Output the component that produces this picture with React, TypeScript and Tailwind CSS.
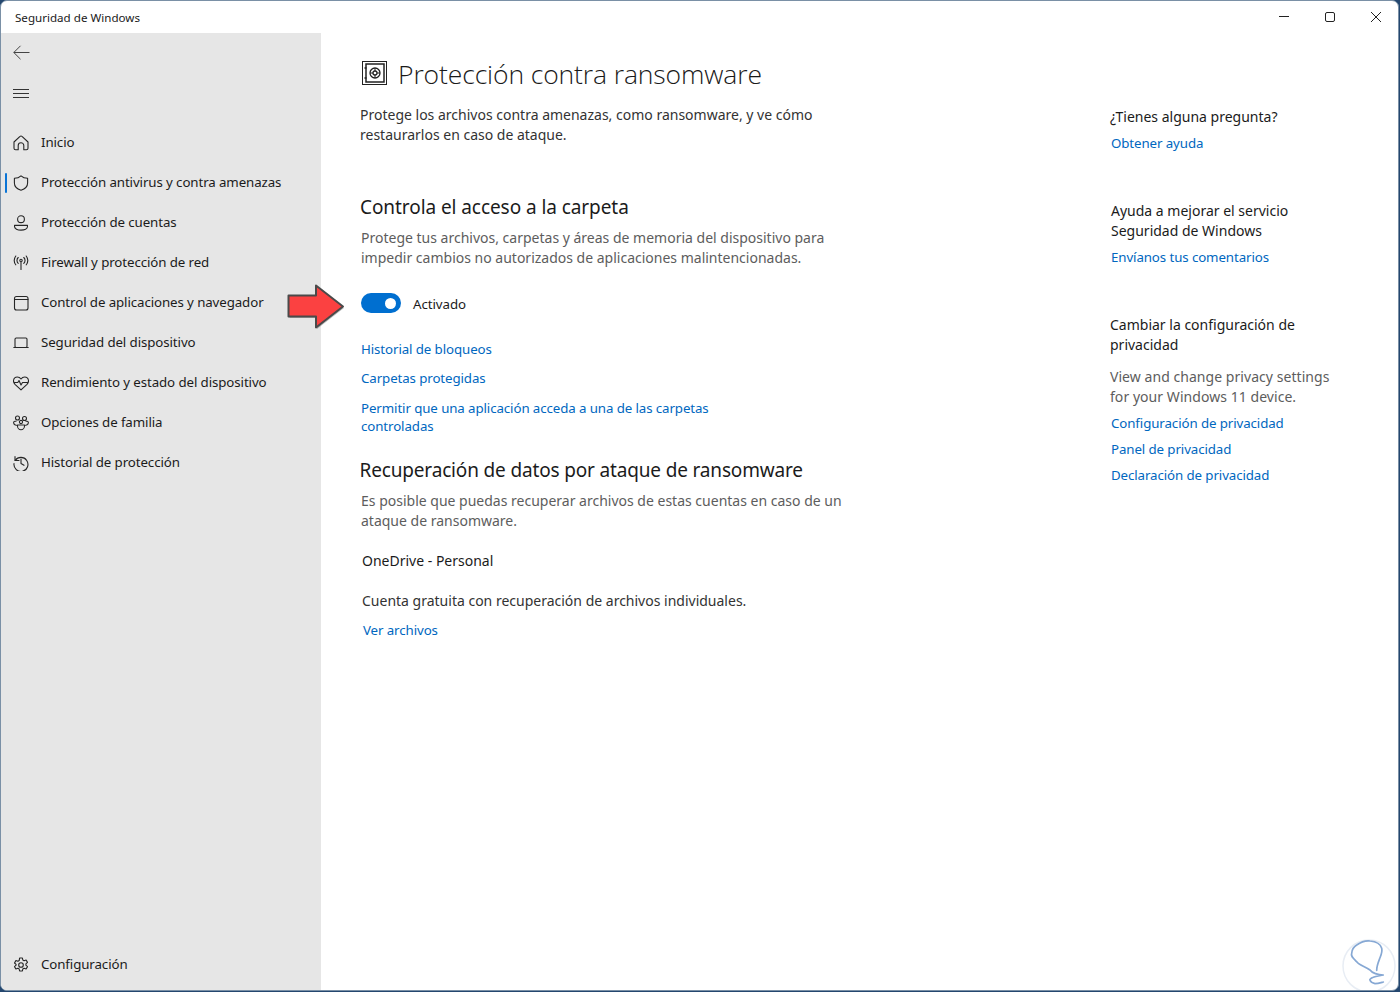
import React from "react";

const I = ({ children, cls = "" }: { children: React.ReactNode; cls?: string }) => (
  <svg viewBox="0 0 16 16" width="16" height="16" fill="none" stroke="#262626" strokeWidth="1.1" strokeLinecap="round" strokeLinejoin="round" className={"shrink-0 " + cls}>
    {children}
  </svg>
);

const icons: Record<string, React.ReactNode> = {
  home: <path d="M1 7 7 1.400a1.400 1.400 0 0 1 2 0L15 7v6.200a1.600 1.600 0 0 1-1.600 1.600h-2.600V10.600a2.800 2.800 0 0 0-5.600 0v4.200H2.600A1.600 1.600 0 0 1 1 13.200z" />,
  shield: <path d="M8 .8c2 1.800 4.200 2.400 6.600 2.500V8c0 3.600-2.600 6-6.600 7.300C4 14 1.400 11.600 1.400 8V3.300C3.800 3.200 6 2.600 8 .8z" />,
  user: <><circle cx="8" cy="4.200" r="3.400" /><path d="M1.500 10.400h13v1.200c0 2.100-3 3.500-6.500 3.500s-6.500-1.400-6.500-3.500z" /></>,
  wifi: <><path d="M8 7.500v7" /><circle cx="8" cy="5.500" r="1.200" /><path d="M5.200 2.500a4 4 0 0 0 0 5.800M10.800 2.500a4 4 0 0 1 0 5.800M2.800 1a7.500 7.500 0 0 0 0 8.800M13.200 1a7.500 7.500 0 0 1 0 8.800" /></>,
  app: <><rect x="1.500" y="1.500" width="13.500" height="13.500" rx="2" /><path d="M1.500 4.500h13.500" /></>,
  laptop: <><rect x="2" y="3" width="12" height="9.500" rx="1.200" /><path d="M.8 12.500h14.400" /></>,
  heart: <path d="M2 9.300C.7 8 .4 6.800.5 5.500.8 3.500 2.400 2 4.300 2c1.500 0 2.800.7 3.700 2 .9-1.300 2.200-2 3.700-2 1.900 0 3.500 1.500 3.800 3.500.1 1.300-.2 2.500-1.500 3.800L8 14.800zM.8 7.500h4l1.200-2 2 4.500 1.500-2.500h5.700" />,
  family: <><circle cx="4.500" cy="3" r="2" /><circle cx="11.500" cy="3.500" r="2" /><circle cx="8" cy="7" r="1.600" /><path d="M4.500 10h7v1c0 2-1.600 3.800-3.500 3.800S4.500 13 4.500 11zM3 6.200H2C1 6.200.5 7 .7 8c.2 1.300 1.300 2.200 2.800 2.200M13 6.200h1c1 0 1.500.8 1.300 1.800-.2 1.300-1.300 2.200-2.800 2.200" /></>,
  history: <><path d="M2 1.500v4h4" /><path d="M2.200 5.400A7 7 0 1 1 1 8.500" /><path d="M8 4v4.500l3 1.800" /></>,
  gear: <><circle cx="8" cy="8" r="2.300" /><path d="M6.600 1h2.800l.4 2 1.300.7 2-.7 1.400 2.400-1.600 1.400v1.400l1.600 1.400-1.400 2.400-2-.7-1.300.7-.4 2H6.600l-.4-2-1.300-.7-2 .7-1.400-2.400 1.600-1.400V7.400L1.500 6l1.400-2.400 2 .7 1.300-.7z" /></>,
};

const nav: [string, string][] = [
  ["home", "Inicio"],
  ["shield", "Protección antivirus y contra amenazas"],
  ["user", "Protección de cuentas"],
  ["wifi", "Firewall y protección de red"],
  ["app", "Control de aplicaciones y navegador"],
  ["laptop", "Seguridad del dispositivo"],
  ["heart", "Rendimiento y estado del dispositivo"],
  ["family", "Opciones de familia"],
  ["history", "Historial de protección"],
];

const L = ({ children, cls = "" }: { children: React.ReactNode; cls?: string }) => (
  <div className={"h-5 leading-5 text-[#0067c0] text-[13.3px] tracking-[-0.1px] " + cls}>{children}</div>
);

export default function App() {
  return (
    <div className="w-[1400px] h-[992px] bg-[#24476f] overflow-hidden text-[#1b1b1b]" style={{ fontFamily: '"Noto Sans", sans-serif' }}>
      <div className="relative w-[1399px] h-[991px] bg-white rounded-[7px] border border-[#7a90a6] flex flex-col overflow-hidden">
        <div className="h-8 flex items-center shrink-0">
          <span className="ml-[14px] text-[11.600px] text-[#1a1a1a] mt-[2px]">Seguridad de Windows</span>
          <div className="ml-auto flex items-center mr-[16px]">
            <svg width="12" height="12" viewBox="0 0 12 12" stroke="#222" fill="none"><path d="M1 5.500h10" /></svg>
            <svg width="12" height="12" viewBox="0 0 12 12" stroke="#222" fill="none" className="ml-[34px]"><rect x="1.500" y="1.500" width="9" height="9" rx="1.500" /></svg>
            <svg width="12" height="12" viewBox="0 0 12 12" stroke="#222" fill="none" className="ml-[34px]"><path d="M1 1l10 10M11 1 1 11" /></svg>
          </div>
        </div>
        <div className="flex flex-1 min-h-0">
          <aside className="w-[320px] shrink-0 bg-[#e6e6e6] flex flex-col pl-[12px] text-[#1b1b1b]">
            <svg width="18" height="16" viewBox="0 0 18 16" fill="none" stroke="#444" strokeWidth="1" className="mt-[12px]"><path d="M16.500 7.500H.8M7.500.8.800 7.500l6.700 6.700" /></svg>
            <svg width="16" height="10" viewBox="0 0 16 10" fill="none" stroke="#333" strokeWidth="1" className="mt-[27px]"><path d="M0 1.500h16M0 5.500h16M0 9.500h16" /></svg>
            <div className="mt-[25px] flex flex-col">
              {nav.map(([ic, t], i) => (
                <div key={t} className="relative h-10 flex items-center">
                  {i === 1 && <div className="absolute left-[-8px] top-[10px] w-[2px] h-[20px] bg-[#0a74d6] rounded-sm" />}
                  <I>{icons[ic]}</I>
                  <span className="ml-[12px] text-[13.300px] tracking-[-0.1px] whitespace-nowrap">{t}</span>
                </div>
              ))}
            </div>
            <div className="mt-auto mb-[5px] h-10 flex items-center">
              <I>{icons.gear}</I>
              <span className="ml-[12px] text-[13.300px] tracking-[-0.1px]">Configuración</span>
            </div>
          </aside>
          <main className="flex-1 flex min-w-0">
            <div className="w-[789px] shrink-0 pt-[22px] pl-[39px]">
              <div className="h-10 flex items-center">
                <svg width="26" height="24" viewBox="0 0 26 24" fill="none" stroke="#222" strokeWidth="1" className="ml-[1px] mt-[-4px]">
                  <rect x="1.500" y="0.500" width="24" height="23" />
                  <rect x="5" y="3" width="18" height="18" strokeWidth="1.500" />
                  <circle cx="14" cy="12" r="5" strokeWidth="1.300" />
                  <circle cx="14" cy="12" r="2" strokeWidth="1.300" />
                  <path d="M14 7v3M14 14v3M9 12h3M16 12h3" />
                  <path d="M3.500 7h2M3.500 17h2" strokeWidth="1.500" />
                </svg>
                <h1 className="ml-[11px] mt-0 text-[26.500px] font-light tracking-[-0.12px] text-[#1a1a1a] whitespace-nowrap" style={{ fontFamily: '"Open Sans", sans-serif' }}>Protección contra ransomware</h1>
              </div>
              <p className="mt-[10px] w-[480px] text-[14px] leading-5 text-[#333]">Protege los archivos contra amenazas, como ransomware, y ve cómo restaurarlos en caso de ataque.</p>
              <h2 className="mt-[48px] h-7 leading-7 text-[19px] tracking-[-0.07px]">Controla el acceso a la carpeta</h2>
              <p className="mt-[7px] ml-[1px] w-[490px] text-[14px] leading-5 text-[#5d5d5d]">Protege tus archivos, carpetas y áreas de memoria del dispositivo para impedir cambios no autorizados de aplicaciones malintencionadas.</p>
              <div className="mt-[25px] ml-[1px] h-5 flex items-center">
                <div className="w-10 h-5 rounded-full bg-[#006fd0] flex items-center justify-end pr-[5px]">
                  <div className="w-[11px] h-[11px] rounded-full bg-white" />
                </div>
                <span className="ml-3 mt-[4px] text-[13.300px] tracking-[-0.06px]">Activado</span>
              </div>
              <L cls="mt-[26px] ml-[1px]">Historial de bloqueos</L>
              <L cls="mt-[9px] ml-[1px]">Carpetas protegidas</L>
              <div className="mt-[11px] ml-[1px] w-[400px] text-[#0067c0] text-[13.300px] leading-[18px] tracking-[-0.1px]">Permitir que una aplicación acceda a una de las carpetas controladas</div>
              <h2 className="mt-[21px] ml-[-0.5px] h-7 leading-7 text-[19px] tracking-[-0.16px] whitespace-nowrap">Recuperación de datos por ataque de ransomware</h2>
              <p className="mt-[7px] ml-[1px] w-[500px] text-[14px] leading-5 text-[#5d5d5d]">Es posible que puedas recuperar archivos de estas cuentas en caso de un ataque de ransomware.</p>
              <div className="mt-5 ml-[2px] h-5 leading-5 text-[14px]">OneDrive - Personal</div>
              <div className="mt-5 ml-[2px] h-5 leading-5 text-[14px] text-[#333]">Cuenta gratuita con recuperación de archivos individuales.</div>
              <L cls="mt-[9px] ml-[3px]">Ver archivos</L>
            </div>
            <div className="flex-1 pt-[74px] text-[14px]">
              <div className="h-5 leading-5">¿Tienes alguna pregunta?</div>
              <L cls="mt-[6px] ml-[1px]">Obtener ayuda</L>
              <div className="mt-[48px] ml-[1px] w-[230px] leading-5">Ayuda a mejorar el servicio Seguridad de Windows</div>
              <L cls="mt-[6px] ml-[1px]">Envíanos tus comentarios</L>
              <div className="mt-[48px] w-[230px] leading-5">Cambiar la configuración de privacidad</div>
              <div className="mt-[12px] w-[228px] leading-5 tracking-[0.05px] text-[#5d5d5d]">View and change privacy settings for your Windows 11 device.</div>
              <L cls="mt-[6px] ml-[1px]">Configuración de privacidad</L>
              <L cls="mt-[6px] ml-[1px]">Panel de privacidad</L>
              <L cls="mt-[6px] ml-[1px]">Declaración de privacidad</L>
            </div>
          </main>
        </div>
        {/* red arrow annotation */}
        <svg width="62" height="48" viewBox="0 0 62 48" className="absolute left-[284px] top-[281px]">
          <path d="M3.500 14.500H31V4l27 21-27 21V35H3.500z" fill="#444" opacity="0.35" transform="translate(1 1)" />
          <path d="M3.500 13.500H31V3.500L58 24.500 31 45.500V34.500H3.500z" fill="#fb4141" stroke="#4a4a4a" strokeWidth="2" strokeLinejoin="round" />
        </svg>
        {/* watermark */}
        <svg width="58" height="56" viewBox="0 0 58 56" className="absolute left-[1339px] top-[934px]" fill="none">
          <circle cx="29" cy="31" r="26" fill="#fff" stroke="#e8edf4" strokeWidth="1.500" />
          <path d="M30 35C24 31 19 30 16.700 26.700 13 23 10.500 21 11.700 18.300 12 13 15 11 16.700 10 21 7 26 5.500 30 6c6 .5 10.500 3 11.700 7.300.8 3-.3 6-1.500 9-1.500 4-3.500 8-3.500 13M30 35c2 3 8 5 13.300 5-3 .8-7 1-10 2.300-2.500 1-4 2-3.300 3 .8 2 3 3 5 3.300 3 0 6-1 8.300-1.600" stroke="#86a8d4" strokeWidth="1.700" strokeLinecap="round" strokeLinejoin="round" />
        </svg>
      </div>
    </div>
  );
}
